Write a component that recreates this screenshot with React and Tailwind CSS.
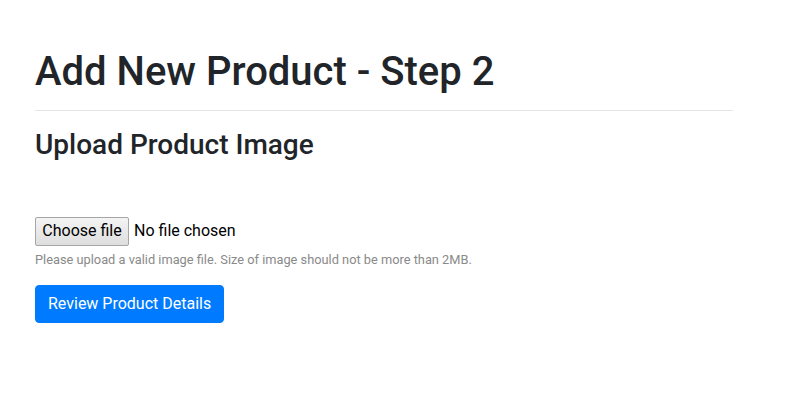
export default function App() {
  return (
    <div className="min-h-[403px] bg-white font-['Roboto',sans-serif] text-[#212529]">
      <div className="w-[698px] ml-[35px] pt-[48px]">
        <h1 className="text-[40px] font-medium leading-[1.2] mb-[14px]">Add New Product - Step 2</h1>
        <hr className="border-t border-[#e5e5e5] mb-[17px]" />
        <h3 className="text-[28px] font-medium leading-[1.2]">Upload Product Image</h3>
        <form className="mt-[55px]">
          <div className="flex flex-col mb-[16px]">
            <label className="flex items-center h-[29px] text-[16px] text-black cursor-default">
              <span className="h-[29px] w-[94px] flex items-center justify-center border border-[#a6a6a6] rounded-[2px] bg-gradient-to-b from-[#f4f4f4] to-[#dedede]">
                Choose file
              </span>
              <span className="ml-[5px]">No file chosen</span>
              <input type="file" className="hidden" />
            </label>
            <small className="text-[12.8px] leading-[1.5] text-[#8a8a8a] mt-[4px]">
              Please upload a valid image file. Size of image should not be more than 2MB.
            </small>
          </div>
          <button type="button" className="h-[38px] bg-[#007bff] text-white text-[16px] leading-[1.5] px-[12px] rounded-[4px] border border-[#007bff]">
            Review Product Details
          </button>
        </form>
      </div>
    </div>
  );
}
